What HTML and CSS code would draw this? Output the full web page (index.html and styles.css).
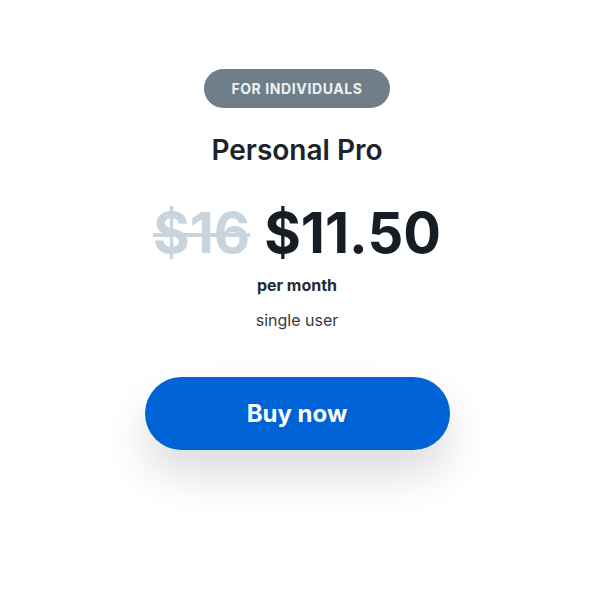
FILE: index.html
```html
<!DOCTYPE html>
<html>
<head>
<meta charset="utf-8">
<link rel="stylesheet" href="styles.css">
</head>
<body>
<div class="page">
  <div class="plan">
    <span class="badge">For individuals</span>
    <h2 class="title">Personal Pro</h2>
    <div class="prices">
      <span class="old">$16</span>
      <span class="new">$11.50</span>
    </div>
    <div class="period">per month</div>
    <div class="users">single user</div>
    <a class="buy" href="#">Buy now</a>
  </div>
</div>
</body>
</html>
```
FILE: styles.css
```css
html, body {
  margin: 0;
  padding: 0;
  background: #ffffff;
}
body {
  font-family: Inter, Roboto, "Liberation Sans", sans-serif;
  color: #1d232b;
}
.page {
  width: 594px;
  display: flex;
  justify-content: center;
  padding-bottom: 100px;
}
.plan {
  display: flex;
  flex-direction: column;
  align-items: center;
  padding-top: 69px;
}
.badge {
  display: flex;
  align-items: center;
  height: 39px;
  padding: 0 27px;
  border-radius: 20px;
  background: #6f7e89;
  color: #eef1f3;
  font-size: 14px;
  font-weight: 700;
  letter-spacing: 0.6px;
  text-transform: uppercase;
}
.title {
  margin: 24px 0 0;
  font-size: 28px;
  font-weight: 600;
  line-height: 36px;
  color: #1d232b;
}
.prices {
  display: flex;
  align-items: baseline;
  gap: 14px;
  margin-top: 33px;
  line-height: 64px;
  font-size: 56px;
  font-weight: 700;
}
.old {
  color: #c8d5de;
  text-decoration: line-through;
  text-decoration-thickness: 4px;
}
.new {
  color: #161d24;
}
.period {
  margin-top: 8px;
  font-size: 16px;
  font-weight: 700;
  line-height: 24px;
  color: #242b33;
}
.users {
  margin-top: 11px;
  font-size: 16px;
  line-height: 24px;
  color: #343b43;
}
.buy {
  margin-top: 45px;
  width: 305px;
  height: 73px;
  display: flex;
  align-items: center;
  justify-content: center;
  border-radius: 37px;
  background: #0063d5;
  color: #ffffff;
  font-size: 24px;
  font-weight: 700;
  text-decoration: none;
  box-shadow: 0 24px 44px rgba(0, 0, 0, 0.14);
}
```
